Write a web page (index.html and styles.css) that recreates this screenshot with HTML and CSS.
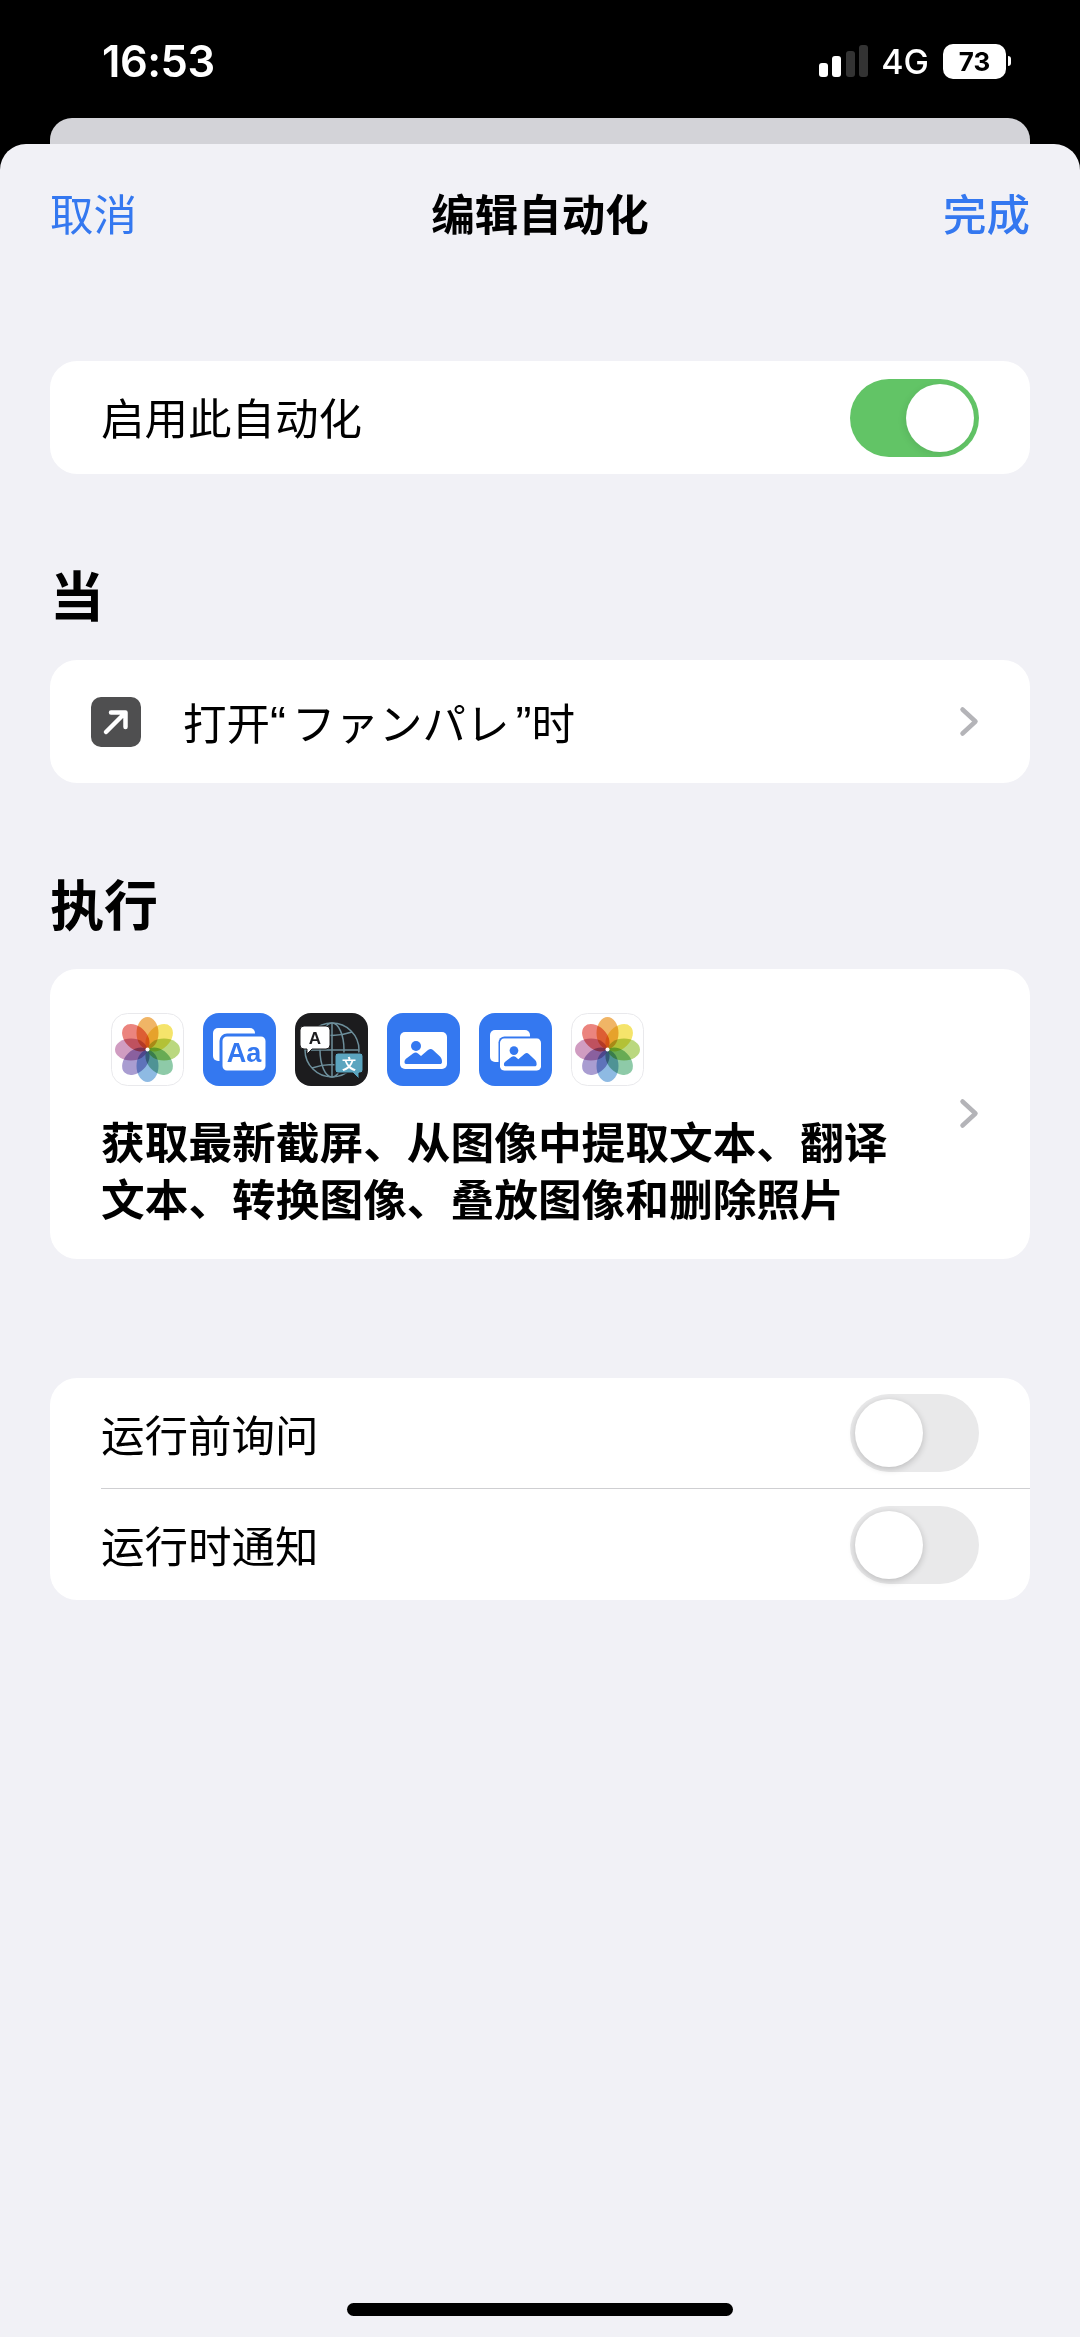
FILE: index.html
```html
<!DOCTYPE html>
<html>
	<head>
		<meta charset="utf-8">
		<title>编辑自动化</title>
		<link rel="stylesheet" href="styles.css">
	</head>
	<body>
		<svg class="defs" width="0" height="0">
			<symbol id="chevron" viewBox="0 0 22 33">
				<path d="M4.500 4.500l13 12-13 12" fill="none" stroke="#b4b4b8" stroke-width="4.500" stroke-linecap="round" stroke-linejoin="round"/>
			</symbol>
			<symbol id="photos" viewBox="0 0 73 73">
				<rect x=".5" y=".5" width="72" height="72" rx="16" fill="#fff" stroke="#e9e9ec"/>
				<g class="petals">
					<ellipse cx="36.500" cy="20" rx="11" ry="16" fill="#eda23f" transform="rotate(0 36.500 36.500)"/>
					<ellipse cx="36.500" cy="20" rx="11" ry="16" fill="#f3de46" transform="rotate(45 36.500 36.500)"/>
					<ellipse cx="36.500" cy="20" rx="11" ry="16" fill="#a9cf5f" transform="rotate(90 36.500 36.500)"/>
					<ellipse cx="36.500" cy="20" rx="11" ry="16" fill="#72bd92" transform="rotate(135 36.500 36.500)"/>
					<ellipse cx="36.500" cy="20" rx="11" ry="16" fill="#72a9dc" transform="rotate(180 36.500 36.500)"/>
					<ellipse cx="36.500" cy="20" rx="11" ry="16" fill="#9384c6" transform="rotate(225 36.500 36.500)"/>
					<ellipse cx="36.500" cy="20" rx="11" ry="16" fill="#c583b2" transform="rotate(270 36.500 36.500)"/>
					<ellipse cx="36.500" cy="20" rx="11" ry="16" fill="#e6655d" transform="rotate(315 36.500 36.500)"/>
				</g>
				<circle cx="36.500" cy="36.500" r="2" fill="#fff"/>
			</symbol>
			<symbol id="landscape" viewBox="0 0 47 37">
				<rect width="47" height="37" rx="5" fill="#fff"/>
				<circle cx="16" cy="14" r="5" fill="#3478f0"/>
				<path d="M4.500 30c0-2 1-3 2.500-4l6-4.500c2-1.500 3.500-1.500 5 0l3 2.500 7-6c2-1.500 3.500-1.500 5 0l7 6.500c1.500 1.500 2 3 2 5.500 0 1.500-1 2-2 2H6c-1 0-1.500-1-1.500-2z" fill="#3478f0"/>
			</symbol>
		</svg>

		<div class="status">
			<span class="time">16:53</span>
			<div class="status-right">
				<svg class="signal" width="49" height="32" viewBox="0 0 49 32">
					<rect x="0" y="18" width="9" height="14" rx="3" fill="#fff"/>
					<rect x="13" y="11" width="9" height="21" rx="3" fill="#fff"/>
					<rect x="27" y="6" width="9" height="26" rx="3" fill="#333"/>
					<rect x="40" y="0" width="9" height="32" rx="3" fill="#333"/>
				</svg>
				<span class="net">4G</span>
				<span class="battery">73</span>
				<span class="battery-tip"></span>
			</div>
		</div>
		<div class="back-sheet"></div>

		<div class="sheet">
			<div class="nav">
				<span class="nav-btn">取消</span>
				<span class="nav-title">编辑自动化</span>
				<span class="nav-btn nav-done">完成</span>
			</div>

			<div class="card row row-enable">
				<span class="row-label">启用此自动化</span>
				<span class="switch on"><span class="knob"></span></span>
			</div>

			<h2 class="section section-when">当</h2>
			<div class="card row row-when">
				<span class="row-left">
					<svg class="open-icon" width="50" height="50" viewBox="0 0 50 50">
						<rect width="50" height="50" rx="10" fill="#4f4f50"/>
						<path d="M15 35L34 16M20 15.500h14.500V30" fill="none" stroke="#fff" stroke-width="4.500" stroke-linecap="round" stroke-linejoin="round"/>
					</svg>
					<span>打开<span class="quote-open">“</span>ファンパレ<span class="quote-close">”</span>时</span>
				</span>
				<svg class="chevron" width="22" height="33"><use href="#chevron"/></svg>
			</div>

			<h2 class="section section-do">执行</h2>
			<div class="card actions">
				<div class="actions-main">
					<div class="icons">
						<svg class="icon" viewBox="0 0 73 73"><use href="#photos"/></svg>
						<svg class="icon" viewBox="0 0 73 73">
							<rect width="73" height="73" rx="16" fill="#3478f0"/>
							<rect x="10" y="15" width="42" height="33" rx="5" fill="#fff"/>
							<rect x="18" y="22" width="46" height="37" rx="6" fill="#fff" stroke="#3478f0" stroke-width="3"/>
							<text x="41" y="49" class="aa">Aa</text>
						</svg>
						<svg class="icon" viewBox="0 0 73 73">
							<rect width="73" height="73" rx="16" fill="#1c1c1e"/>
							<g fill="none" stroke="#6d8f9b" stroke-width="1.500">
								<circle cx="37" cy="37" r="27"/>
								<ellipse cx="37" cy="37" rx="12" ry="27"/>
								<path d="M37 10v54M10 37h54M17 19q20 7 40 0M17 55q20-7 40 0"/>
							</g>
							<path d="M9 13h22a4 4 0 0 1 4 4v15a4 4 0 0 1-4 4H17l-5 5v-5H9a4 4 0 0 1-4-4V17a4 4 0 0 1 4-4z" fill="#fff" stroke="#1c1c1e" stroke-width="1"/>
							<text x="20" y="31" class="tr-a">A</text>
							<path d="M43 40h22a3 3 0 0 1 3 3v14a3 3 0 0 1-3 3h-1v6l-6-6H43a3 3 0 0 1-3-3V43a3 3 0 0 1 3-3z" fill="#5ba5bf" stroke="#1c1c1e" stroke-width="1"/>
							<text x="54" y="56" class="tr-zh">文</text>
						</svg>
						<svg class="icon" viewBox="0 0 73 73">
							<rect width="73" height="73" rx="16" fill="#3478f0"/>
							<svg x="13" y="19" width="47" height="37" viewBox="0 0 47 37"><use href="#landscape"/></svg>
						</svg>
						<svg class="icon" viewBox="0 0 73 73">
							<rect width="73" height="73" rx="16" fill="#3478f0"/>
							<rect x="11" y="17" width="40" height="32" rx="5" fill="#fff"/>
							<rect x="19.500" y="23.500" width="44" height="36" rx="6" fill="#3478f0"/>
							<svg x="21" y="25" width="41" height="33" viewBox="0 0 47 37"><use href="#landscape"/></svg>
						</svg>
						<svg class="icon" viewBox="0 0 73 73"><use href="#photos"/></svg>
					</div>
					<div class="actions-text">获取最新截屏、从图像中提取文本、翻译<br>文本、转换图像、叠放图像和删除照片</div>
				</div>
				<svg class="chevron" width="22" height="33"><use href="#chevron"/></svg>
			</div>

			<div class="card options">
				<div class="row option">
					<span>运行前询问</span>
					<span class="switch"><span class="knob"></span></span>
				</div>
				<div class="row option option-last">
					<span>运行时通知</span>
					<span class="switch"><span class="knob"></span></span>
				</div>
			</div>

			<div class="home-wrap"><div class="home-bar"></div></div>
		</div>
	</body>
</html>
```

FILE: styles.css
```css
* { box-sizing: border-box; }

html, body {
	margin: 0;
	padding: 0;
}

body {
	width: 1080px;
	height: 2337px;
	overflow: hidden;
	background: #000;
	font-family: "Noto Sans CJK SC", "Liberation Sans", sans-serif;
	color: #000;
}

.defs { position: absolute; }

.status {
	height: 118px;
	padding: 36px 69px 0 102px;
	display: flex;
	justify-content: space-between;
	align-items: flex-start;
	color: #fff;
}

.time {
	font-family: Inter, sans-serif;
	font-size: 43.500px;
	font-weight: 600;
	line-height: 50px;
	letter-spacing: -0.5px;
}

.status-right {
	display: flex;
	align-items: center;
	height: 50px;
}

.signal { margin-right: 13px; }

.net {
	font-family: Inter, sans-serif;
	font-size: 34px;
	font-weight: 500;
	margin-right: 14px;
}

.battery {
	width: 63px;
	height: 35px;
	border-radius: 10px;
	background: #fff;
	color: #000;
	font-family: Inter, sans-serif;
	font-size: 26px;
	font-weight: 700;
	text-align: center;
	line-height: 35px;
}

.battery-tip {
	width: 3px;
	height: 10px;
	margin-left: 2px;
	border-radius: 0 3px 3px 0;
	background: #fff;
}

.back-sheet {
	height: 26px;
	margin: 0 50px;
	border-radius: 22px 22px 0 0;
	background: #d3d3d8;
}

.sheet {
	height: 2193px;
	padding: 0 50px;
	border-radius: 26px 26px 0 0;
	background: #f1f1f6;
}

.nav {
	height: 217px;
	padding-top: 39px;
	display: flex;
	justify-content: space-between;
	align-items: flex-start;
	font-size: 43.500px;
	line-height: 60px;
}

.nav-btn { color: #3478f0; }
.nav-done { font-weight: 500; }
.nav-title { font-weight: 700; }

.card {
	background: #fff;
	border-radius: 27px;
}

.row {
	display: flex;
	justify-content: space-between;
	align-items: center;
	font-size: 43.500px;
}

.row-enable {
	height: 113px;
	padding: 0 51px;
}

.row-label { margin-bottom: 3px; }

.section {
	margin: 0;
	font-size: 54px;
	line-height: 70px;
	font-weight: 700;
}

.section-when { padding-top: 85px; height: 186px; }
.section-do { padding-top: 85px; height: 186px; }

.row-when {
	height: 123px;
	padding: 0 50px 0 41px;
}

.row-left {
	display: flex;
	align-items: center;
	gap: 42px;
}

.quote-open,
.quote-close {
	font-family: "Liberation Sans", sans-serif;
	font-size: 48px;
}

.quote-open { padding-right: 6px; }
.quote-close { padding-left: 6px; }

.switch {
	width: 129px;
	height: 78px;
	padding: 5px;
	border-radius: 39px;
	background: #e9e9ea;
	display: flex;
}

.switch.on {
	background: #62c466;
	justify-content: flex-end;
}

.knob {
	width: 68px;
	height: 68px;
	border-radius: 50%;
	background: #fff;
}

.switch:not(.on) .knob { box-shadow: 0 2px 7px rgba(0, 0, 0, 0.2); }
.switch.on .knob { box-shadow: -2px 2px 7px rgba(0, 0, 0, 0.08); }

.actions {
	height: 290px;
	padding: 44px 50px 0 61px;
	display: flex;
	justify-content: space-between;
	align-items: flex-start;
}

.actions .chevron { margin-top: 84px; }

.icons {
	display: flex;
	gap: 19px;
	margin-bottom: 29px;
}

.icon {
	width: 73px;
	height: 73px;
	display: block;
}

.petals ellipse { mix-blend-mode: multiply; opacity: 0.8; }

.aa {
	font-family: "Liberation Sans", sans-serif;
	font-size: 27px;
	font-weight: 700;
	fill: #3478f0;
	text-anchor: middle;
}

.tr-a {
	font-family: "Liberation Sans", sans-serif;
	font-size: 17px;
	font-weight: 700;
	fill: #1c1c1e;
	text-anchor: middle;
}

.tr-zh {
	font-family: "Noto Sans CJK SC", sans-serif;
	font-size: 14px;
	font-weight: 700;
	fill: #fff;
	text-anchor: middle;
}

.actions-text {
	margin-left: -10px;
	font-family: "Liberation Sans", "Noto Sans CJK SC", sans-serif;
	font-size: 43.700px;
	font-weight: 700;
	line-height: 57px;
	white-space: nowrap;
}

.options {
	margin-top: 119px;
	height: 222px;
	padding-left: 51px;
}

.option {
	height: 111px;
	padding-right: 51px;
	border-bottom: 1.500px solid #cfcfd2;
}

.option-last { border-bottom: 0; }

.home-wrap {
	padding-top: 703px;
	display: flex;
	justify-content: center;
}

.home-bar {
	width: 386px;
	height: 13px;
	border-radius: 7px;
	background: #000;
}
```
